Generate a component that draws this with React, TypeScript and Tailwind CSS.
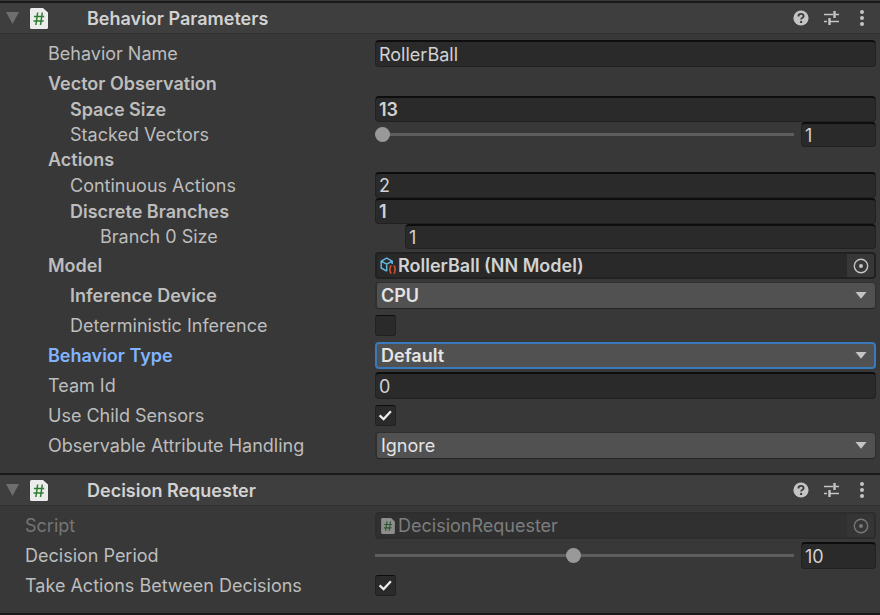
import { useId, useState } from "react";
import type { ReactNode } from "react";

const fieldBox =
  "h-full min-w-0 rounded-[4px] border border-t-2 border-[#212121] border-t-[#0d0d0d] bg-[#2a2a2a] pl-[3px] text-[#d2d2d2] outline-none";

type RowProps = {
  label: string;
  id?: string;
  bold?: boolean;
  indent?: string;
  height?: string;
  tone?: string;
  children?: ReactNode;
};

function Row({ label, id, bold, indent = "pl-12", height = "h-[27px]", tone = "text-[#bdbdbd]", children }: RowProps) {
  return (
    <div className={`flex items-center ${height} ${bold ? "font-semibold" : "font-normal"}`}>
      <label htmlFor={id} className={`w-[375px] shrink-0 pt-px whitespace-nowrap ${indent} ${tone}`}>
        {label}
      </label>
      <div className="flex h-full min-w-0 flex-1 items-center">{children}</div>
    </div>
  );
}

function TextRow({ value, inset, ...row }: RowProps & { value: string; inset?: boolean }) {
  const id = useId();
  const [text, setText] = useState(value);
  return (
    <Row {...row} id={id}>
      <input
        id={id}
        type="text"
        value={text}
        onChange={(e) => setText(e.target.value)}
        className={`flex-1 ${fieldBox} ${inset ? "ml-[30px]" : ""}`}
      />
    </Row>
  );
}

function SliderRow({ value, min, max, ...row }: RowProps & { value: number; min: number; max: number }) {
  const id = useId();
  const [current, setCurrent] = useState(value);
  return (
    <Row {...row} id={id}>
      <input
        id={id}
        type="range"
        min={min}
        max={max}
        value={current}
        onChange={(e) => setCurrent(Number(e.target.value))}
        className="h-[15px] min-w-0 flex-1 appearance-none bg-transparent outline-none [&::-webkit-slider-runnable-track]:h-[3px] [&::-webkit-slider-runnable-track]:bg-[#5e5e5e] [&::-webkit-slider-thumb]:-mt-[6px] [&::-webkit-slider-thumb]:size-[15px] [&::-webkit-slider-thumb]:appearance-none [&::-webkit-slider-thumb]:rounded-full [&::-webkit-slider-thumb]:bg-[#999999]"
      />
      <input
        type="text"
        aria-label={`${row.label} value`}
        value={current}
        onChange={(e) => setCurrent(Number(e.target.value) || min)}
        className={`ml-[7px] w-[75px] ${fieldBox}`}
      />
    </Row>
  );
}

function SelectRow({ options, focused, ...row }: RowProps & { options: string[]; focused?: boolean }) {
  const id = useId();
  return (
    <Row {...row} id={id}>
      <div className="relative h-full flex-1">
        <select
          id={id}
          className={`size-full appearance-none rounded-[4px] bg-[#515151] pl-1 text-[#e4e4e4] outline-none ${
            focused
              ? "border-2 border-[#3a79bb]"
              : "border border-l-2 border-[#303030] border-b-[#242424]"
          }`}
        >
          {options.map((o) => (
            <option key={o}>{o}</option>
          ))}
        </select>
        <svg className="pointer-events-none absolute top-[10px] right-[9px]" width="12" height="7" viewBox="0 0 12 7">
          <path d="M0.5 0h11L6 6.8z" fill="#c4c4c4" />
        </svg>
      </div>
    </Row>
  );
}

function CheckRow({ checked, ...row }: RowProps & { checked?: boolean }) {
  const id = useId();
  return (
    <Row {...row} id={id}>
      <div className="relative size-[21px]">
        <input
          id={id}
          type="checkbox"
          defaultChecked={checked}
          className="peer block size-full appearance-none rounded-[3px] border border-[#212121] border-t-[#0d0d0d] bg-[#2a2a2a]"
        />
        <svg
          className="pointer-events-none invisible absolute inset-0 peer-checked:visible"
          width="21"
          height="21"
          viewBox="0 0 21 21"
        >
          <path d="M4.600 10.400l4 3.700 7.300-7.800" fill="none" stroke="#ececec" strokeWidth="2.200" />
        </svg>
      </div>
    </Row>
  );
}

function ScriptIcon({ className }: { className: string }) {
  return (
    <svg className={className} viewBox="0 0 18 21" aria-hidden="true">
      <path d="M1.500 0H13l5 4.500V19.500a1.500 1.500 0 0 1-1.500 1.500h-15A1.500 1.500 0 0 1 0 19.500v-18A1.500 1.500 0 0 1 1.500 0z" fill="#ececec" />
      <path d="M7.700 4.500L5.900 17M12.300 4.500L10.500 17M4 8.500h10.200M3.500 13h10.200" fill="none" stroke="#2f7d32" strokeWidth="1.500" />
    </svg>
  );
}

function ModelIcon({ className }: { className: string }) {
  return (
    <svg className={className} viewBox="0 0 17 17" aria-hidden="true">
      <path d="M12.200 7V4.200L6.700 1.200 1.200 4.200v6.800l5.500 3.200M1.200 4.200l5.500 3 5.500-3M6.700 7.200V14.200" fill="none" stroke="#63b4dc" strokeWidth="1.500" />
      <path
        d="M11.500 9c-1.700 0-1.200 1.600-1.300 2.600-.1.600-.5.900-1.100 1 .6.100 1 .4 1.100 1 .1 1-.4 2.600 1.300 2.600M13.500 9c1.700 0 1.200 1.600 1.300 2.600.1.600.5.900 1.100 1-.6.100-1 .4-1.100 1-.1 1 .4 2.600-1.300 2.600"
        fill="none"
        stroke="#d9572f"
        strokeWidth="1.400"
      />
    </svg>
  );
}

function ObjectRow({ value, icon, disabled, ...row }: RowProps & { value: string; icon: ReactNode; disabled?: boolean }) {
  const id = useId();
  return (
    <Row {...row} id={id}>
      <div
        className={`flex h-full min-w-0 flex-1 items-center overflow-hidden rounded-[4px] border-2 pl-[3px] ${
          disabled ? "border-[#2d2d2d] bg-[#303030]" : "border-[#212121] bg-[#292929]"
        }`}
      >
        {icon}
        <input
          id={id}
          type="text"
          readOnly
          disabled={disabled}
          value={value}
          className={`min-w-0 flex-1 bg-transparent pt-px outline-none ${disabled ? "text-[#7d7d7d]" : "text-[#d2d2d2]"}`}
        />
        <button
          type="button"
          disabled={disabled}
          aria-label={`Select ${row.label}`}
          className={`flex h-full w-[27px] items-center justify-center ${disabled ? "bg-[#353535] text-[#777777]" : "bg-[#373737] text-[#c4c4c4]"}`}
        >
          <svg width="16" height="16" viewBox="0 0 16 16">
            <circle cx="8" cy="8" r="6.700" fill="none" stroke="currentColor" strokeWidth="1.400" />
            <circle cx="8" cy="8" r="2" fill="currentColor" />
          </svg>
        </button>
      </div>
    </Row>
  );
}

function Header({ title }: { title: string }) {
  return (
    <header className="flex h-[31px] items-center border-b border-[#303030] bg-[#3e3e3e] pr-4 pl-[6px] text-[#c4c4c4]">
      <button type="button" aria-label={`Collapse ${title}`}>
        <svg width="13" height="12" viewBox="0 0 13 12">
          <path d="M0 0h13L6.500 12z" fill="#6e6e6e" />
        </svg>
      </button>
      <ScriptIcon className="ml-[11px] h-[21px] w-[18px]" />
      <h2 className="ml-[39px] flex-1 pt-[2px] font-semibold text-[#d2d2d2]">{title}</h2>
      <div className="flex items-center gap-[15px]">
        <button type="button" aria-label="Help">
          <svg width="16" height="16" viewBox="0 0 16 16">
            <circle cx="8" cy="8" r="7.600" fill="#c4c4c4" />
            <path d="M5.400 6.400C5.400 4.800 6.400 3.900 8 3.900S10.600 4.800 10.600 6.200C10.600 7.800 8.100 7.800 8.100 9.600" fill="none" stroke="#3e3e3e" strokeWidth="1.900" />
            <circle cx="8.100" cy="11.900" r="1.200" fill="#3e3e3e" />
          </svg>
        </button>
        <button type="button" aria-label="Presets">
          <svg width="15" height="16" viewBox="0 0 15 16">
            <path d="M0 4.500h9M11 4.500h4M0 11.500h3M6 11.500h9" stroke="#c4c4c4" strokeWidth="1.300" />
            <path d="M10.500 1v7M5.500 8v7" stroke="#c4c4c4" strokeWidth="2.400" />
          </svg>
        </button>
        <button type="button" aria-label="More options" className="pl-[6px]">
          <svg width="4" height="16" viewBox="0 0 4 16">
            <circle cx="2" cy="2" r="2" fill="#c4c4c4" />
            <circle cx="2" cy="8" r="2" fill="#c4c4c4" />
            <circle cx="2" cy="14" r="2" fill="#c4c4c4" />
          </svg>
        </button>
      </div>
    </header>
  );
}

function Panel({ title, children }: { title: string; children: ReactNode }) {
  return (
    <section className="border-t-2 border-[#1a1a1a]">
      <Header title={title} />
      <div className="flex flex-col gap-[3px] pt-[6px] pr-1 pb-[14px]">{children}</div>
    </section>
  );
}

export default function App() {
  return (
    <main className="min-h-screen bg-[#383838] pt-px font-['Inter','Liberation_Sans',sans-serif] text-[18px] leading-6 [font-optical-sizing:none]">
      <Panel title="Behavior Parameters">
        <TextRow label="Behavior Name" value="RollerBall" />
        <div>
          <Row label="Vector Observation" bold height="h-[26px]" />
          <TextRow label="Space Size" value="13" bold indent="pl-[70px]" height="h-[26px]" />
          <SliderRow label="Stacked Vectors" value={1} min={1} max={50} indent="pl-[70px]" height="h-[25px]" />
          <Row label="Actions" bold height="h-[25px]" />
          <TextRow label="Continuous Actions" value="2" indent="pl-[70px]" height="h-[26px]" />
          <TextRow label="Discrete Branches" value="1" bold indent="pl-[70px]" height="h-[26px]" />
          <TextRow label="Branch 0 Size" value="1" inset indent="pl-[100px]" height="h-[25px]" />
        </div>
        <ObjectRow label="Model" value="RollerBall (NN Model)" bold icon={<ModelIcon className="mr-px size-[17px]" />} />
        <SelectRow label="Inference Device" options={["CPU", "GPU", "Burst"]} bold indent="pl-[70px]" />
        <CheckRow label="Deterministic Inference" indent="pl-[70px]" />
        <SelectRow
          label="Behavior Type"
          options={["Default", "Heuristic Only", "Inference Only"]}
          bold
          focused
          tone="text-[#81b4ff]"
        />
        <TextRow label="Team Id" value="0" />
        <CheckRow label="Use Child Sensors" checked />
        <SelectRow label="Observable Attribute Handling" options={["Ignore", "Exclude Inherited", "Examine All"]} />
      </Panel>
      <Panel title="Decision Requester">
        <ObjectRow
          label="Script"
          value="DecisionRequester"
          disabled
          indent="pl-[25px]"
          tone="text-[#757575]"
          icon={<ScriptIcon className="mr-[3px] ml-px h-4 w-[14px] opacity-50" />}
        />
        <SliderRow label="Decision Period" value={10} min={1} max={20} indent="pl-[25px]" />
        <CheckRow label="Take Actions Between Decisions" checked indent="pl-[25px]" />
      </Panel>
      <div className="border-t-2 border-[#1a1a1a]" />
    </main>
  );
}
